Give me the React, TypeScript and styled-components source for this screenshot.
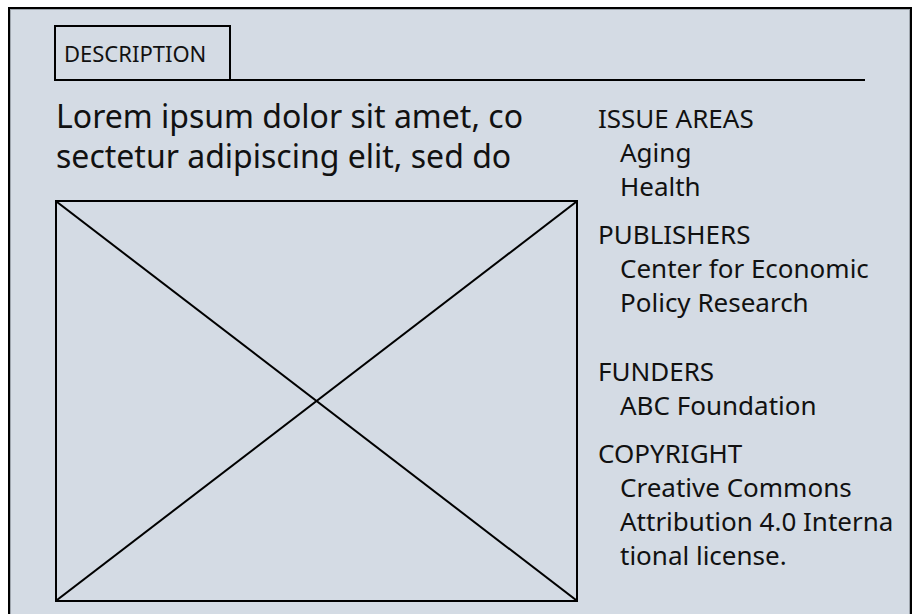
import styled, { createGlobalStyle } from 'styled-components';

const GlobalStyle = createGlobalStyle`
  html, body {
    margin: 0;
    padding: 0;
    background: #ffffff;
    overflow: hidden;
  }
  body {
    font-family: "Noto Sans", "Open Sans", sans-serif;
    color: #111111;
  }
`;

const Frame = styled.div`
  margin: 7px 6px 0 8px;
  height: 640px;
  border: 2px solid #000;
  border-bottom: none;
  background: #d4dbe4;
  box-shadow: inset 1px 1px 0 #9ea5ad, inset -1px 0 0 #9ea5ad;
  box-sizing: border-box;
`;

const Header = styled.div`
  display: flex;
  margin: 16px 45px 0 44px;
  border-bottom: 2px solid #000;
`;

const Tab = styled.div`
  display: flex;
  align-items: center;
  width: 177px;
  height: 56px;
  box-sizing: border-box;
  padding-left: 8px;
  margin-bottom: -2px;
  border: 2px solid #000;
  font-size: 22px;
`;

const Body = styled.div`
  display: grid;
  grid-template-columns: 523px 1fr;
  column-gap: 20px;
  margin: 0 0 0 45px;
`;

const Main = styled.div`
  display: flex;
  flex-direction: column;
  gap: 24px;
  padding-top: 15px;
`;

const Lead = styled.p`
  margin: 0;
  padding-left: 1px;
  font-size: 32px;
  line-height: 40px;
  white-space: nowrap;
`;

const Placeholder = styled.div`
  width: 523px;
  height: 402px;
  border: 2px solid #000;
  box-sizing: border-box;

  svg {
    display: block;
    width: 100%;
    height: 100%;
  }
`;

const Aside = styled.div`
  display: flex;
  flex-direction: column;
  gap: 14px;
  padding-top: 20px;
  font-size: 26px;
  line-height: 34px;
`;

const Section = styled.div<{ $spaceAfter?: number }>`
  display: flex;
  flex-direction: column;
  padding-bottom: ${({ $spaceAfter }) => $spaceAfter ?? 0}px;
`;

const Label = styled.div`
  text-transform: uppercase;
`;

const Item = styled.div`
  padding-left: 22px;
  white-space: nowrap;
`;

const meta = [
  { label: 'Issue Areas', items: ['Aging', 'Health'] },
  { label: 'Publishers', items: ['Center for Economic', 'Policy Research'], spaceAfter: 21 },
  { label: 'Funders', items: ['ABC Foundation'] },
  { label: 'Copyright', items: ['Creative Commons', 'Attribution 4.0 Interna', 'tional license.'] },
];

export default function App() {
  return (
    <>
      <GlobalStyle />
      <Frame>
        <Header>
          <Tab>DESCRIPTION</Tab>
        </Header>
        <Body>
          <Main>
            <Lead>
              Lorem ipsum dolor sit amet, co
              <br />
              sectetur adipiscing elit, sed do
            </Lead>
            <Placeholder>
              <svg viewBox="0 0 100 100" preserveAspectRatio="none">
                <line x1="0" y1="0" x2="100" y2="100" stroke="#000" strokeWidth="2" vectorEffect="non-scaling-stroke" />
                <line x1="100" y1="0" x2="0" y2="100" stroke="#000" strokeWidth="2" vectorEffect="non-scaling-stroke" />
              </svg>
            </Placeholder>
          </Main>
          <Aside>
            {meta.map((s) => (
              <Section key={s.label} $spaceAfter={s.spaceAfter}>
                <Label>{s.label}</Label>
                {s.items.map((it) => (
                  <Item key={it}>{it}</Item>
                ))}
              </Section>
            ))}
          </Aside>
        </Body>
      </Frame>
    </>
  );
}
